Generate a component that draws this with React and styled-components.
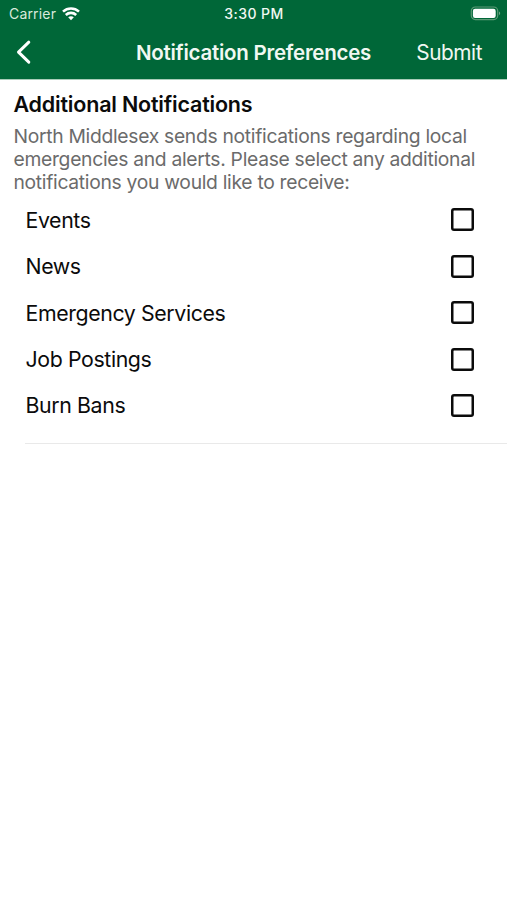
import React, { useState } from "react";
import styled, { createGlobalStyle } from "styled-components";

const GlobalStyle = createGlobalStyle`
  * { box-sizing: border-box; }
  body { margin: 0; background: #fff; font-family: Inter, "Liberation Sans", sans-serif; }
`;

const Screen = styled.main`
  min-height: 900px;
  background: #fff;
  color: #0b0b0b;
`;

const Header = styled.header`
  height: 80px;
  border-bottom: 1px solid #a9cdb9;
  background: #006738;
  color: #f1f8f2;
`;

const StatusBar = styled.div`
  height: 27px;
  padding: 0 6px 0 9px;
  display: grid;
  grid-template-columns: 1fr auto 1fr;
  align-items: center;
  font-size: 14px;
`;

const Carrier = styled.div`
  display: flex;
  align-items: center;
  gap: 6px;
  color: #d9eadc;
  letter-spacing: 0.18px;
`;

const Clock = styled.time`
  font-weight: 500;
  letter-spacing: 0.42px;
  transform: translateX(-1px);
`;

const Battery = styled.svg`
  justify-self: end;
  display: block;
`;

const NavBar = styled.nav`
  height: 51px;
  padding: 0 25px;
  display: grid;
  grid-template-columns: 1fr auto 1fr;
  align-items: center;
`;

const NavButton = styled.button`
  padding: 0;
  border: 0;
  background: none;
  color: inherit;
  font: inherit;
  font-size: 20.8px;
  letter-spacing: -0.45px;
  line-height: 26px;
  justify-self: ${(p) => p.$side};
  margin-left: ${(p) => (p.$side === "start" ? "-9px" : "0")};
  svg { display: block; }
`;

const Title = styled.h1`
  margin: 0;
  font-size: 20.5px;
  font-weight: 600;
  line-height: 26px;
  letter-spacing: -0.25px;
  white-space: nowrap;
`;

const Intro = styled.section`
  padding: 12px 13.5px 0;
`;

const Heading = styled.h2`
  margin: 0 0 8px;
  font-size: 21.5px;
  font-weight: 600;
  line-height: 25px;
  letter-spacing: -0.2px;
`;

const Description = styled.p`
  margin: 0;
  color: #6b6b6b;
  font-size: 19.3px;
  line-height: 23.2px;
  letter-spacing: -0.3px;
  white-space: nowrap;
`;

const Options = styled.div`
  margin-left: 25px;
  padding: 2.1px 33px 13.9px 0.5px;
  border-bottom: 1px solid #e9e9e9;
`;

const Option = styled.label`
  height: 46.4px;
  display: flex;
  align-items: center;
  justify-content: space-between;
  font-size: 21.3px;
  letter-spacing: -0.38px;
`;

const Checkbox = styled.input`
  appearance: none;
  width: 23px;
  height: 23px;
  margin: 0;
  border-radius: 3px;
  box-shadow: inset 0 0 0 2.5px #0b0b0b;
  background: ${(p) => (p.checked ? "#006738" : "#fff")};
`;

const lines = [
  "North Middlesex sends notifications regarding local",
  "emergencies and alerts. Please select any additional",
  "notifications you would like to receive:",
];

const options = ["Events", "News", "Emergency Services", "Job Postings", "Burn Bans"];

export default function App() {
  const [selected, setSelected] = useState([]);
  const toggle = (name) =>
    setSelected((s) => (s.includes(name) ? s.filter((n) => n !== name) : [...s, name]));

  return (
    <Screen>
      <GlobalStyle />
      <Header>
        <StatusBar>
          <Carrier>
            Carrier
            <svg width="18" height="14" viewBox="0 0 18 14" fill="none" stroke="#fff" strokeWidth="2.6">
              <path d="M1 4.6C5.6.4 12.4.4 17 4.6" />
              <path d="M3.8 8C6.8 5.2 11.2 5.2 14.2 8" />
              <path d="M6.2 10.2C7.8 8.9 10.2 8.9 11.8 10.2L9 13.2Z" fill="#fff" stroke="none" />
            </svg>
          </Carrier>
          <Clock>3:30 PM</Clock>
          <Battery width="31" height="15" viewBox="0 0 31 15">
            <rect x="1.3" y="1" width="26.4" height="12.6" rx="4" fill="none" stroke="#5c9a76" strokeWidth="1.2" />
            <rect x="2.9" y="2.7" width="22.8" height="9.2" rx="2.2" fill="#fff" />
            <path d="M29 5.6C30.6 6.2 30.6 8.6 29 9.2Z" fill="#6da685" />
          </Battery>
        </StatusBar>
        <NavBar>
          <NavButton $side="start" aria-label="Back">
            <svg width="16" height="26" viewBox="0 0 16 26" fill="none" stroke="#fff" strokeWidth="3" strokeLinecap="round" strokeLinejoin="round">
              <path d="M12.8 2.2L2.5 12.2L12.8 22.2" />
            </svg>
          </NavButton>
          <Title>Notification Preferences</Title>
          <NavButton $side="end">Submit</NavButton>
        </NavBar>
      </Header>
      <Intro>
        <Heading>Additional Notifications</Heading>
        <Description>
          {lines.map((line) => (
            <React.Fragment key={line}>{line}<br /></React.Fragment>
          ))}
        </Description>
      </Intro>
      <Options>
        {options.map((name) => (
          <Option key={name}>
            {name}
            <Checkbox type="checkbox" checked={selected.includes(name)} onChange={() => toggle(name)} />
          </Option>
        ))}
      </Options>
    </Screen>
  );
}
